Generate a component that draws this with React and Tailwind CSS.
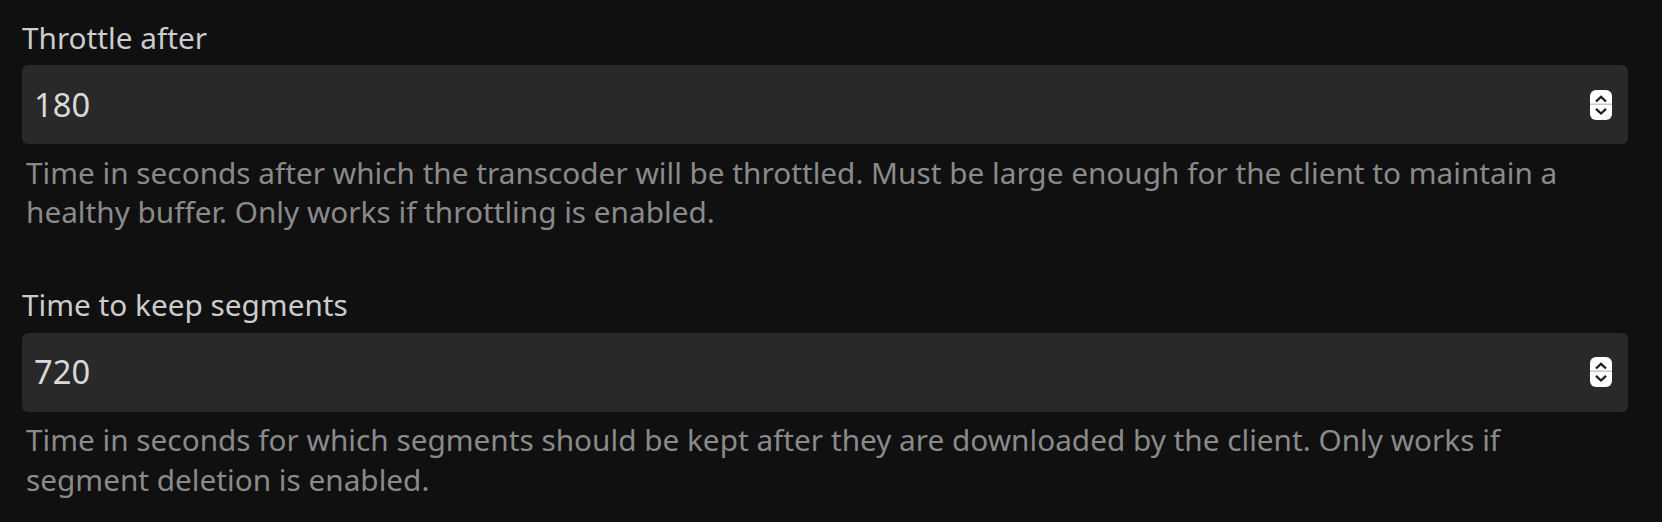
import { useState } from 'react';

const Spinner = () => (
  <svg width="22" height="30" viewBox="0 0 22 30" className="shrink-0">
    <rect x="0" y="0" width="22" height="30" rx="6" fill="#ffffff" />
    <rect x="0" y="13.5" width="22" height="1.5" fill="#c8c8c8" />
    <path d="M6 11.5 L11 6.8 L16 11.5" fill="none" stroke="#1e1e1e" strokeWidth="2.3" />
    <path d="M6 18.8 L11 23.5 L16 18.8" fill="none" stroke="#1e1e1e" strokeWidth="2.3" />
  </svg>
);

const NumberField = ({ label, value, description }) => {
  const [val] = useState(value);

  return (
    <div className="mb-[54px]">
      <label className="block text-[29.75px] leading-[40px] text-[#cccccc] mb-[7.5px]">
        {label}
      </label>
      <div className="flex items-center justify-between h-[79px] bg-[#292929] rounded-[6px] pl-[12px] pr-[16px]">
        <span className="text-[32.7px] leading-[44px] text-[#d9d9d9]">{val}</span>
        <Spinner />
      </div>
      <div className="mt-[8.5px] pl-[4px] text-[29.75px] leading-[39.4px] text-[#8a8a8a]">
        {description}
      </div>
    </div>
  );
};

const App = () => {
  return (
    <div
      className="min-h-[522px] bg-[#101010] pt-[17.5px] pl-[22px] pr-[34px]"
      style={{ fontFamily: '"Noto Sans", "Open Sans", sans-serif' }}
    >
      <NumberField
        label="Throttle after"
        value="180"
        description="Time in seconds after which the transcoder will be throttled. Must be large enough for the client to maintain a healthy buffer. Only works if throttling is enabled."
      />
      <NumberField
        label="Time to keep segments"
        value="720"
        description="Time in seconds for which segments should be kept after they are downloaded by the client. Only works if segment deletion is enabled."
      />
    </div>
  );
};

export default App;
